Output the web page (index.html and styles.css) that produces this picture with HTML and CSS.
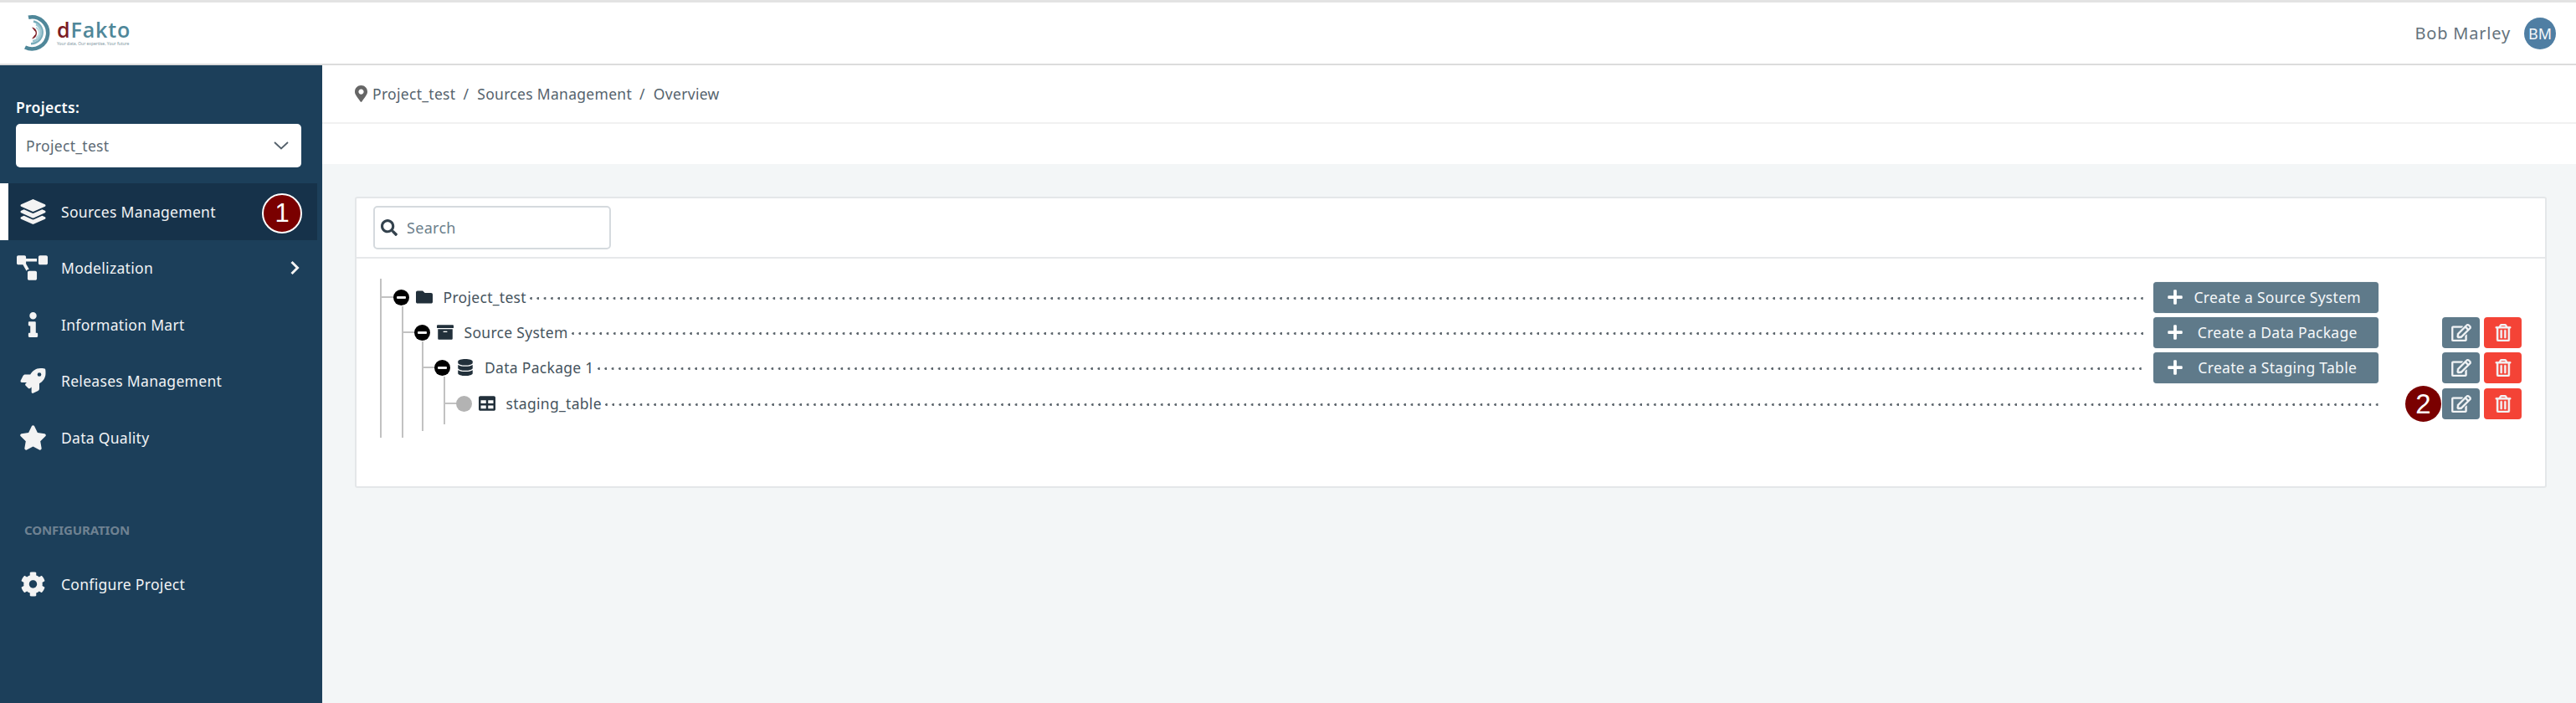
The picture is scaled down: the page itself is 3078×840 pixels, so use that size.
FILE: index.html
```html
<!DOCTYPE html>
<html lang="en">
<head>
<meta charset="utf-8">
<title>dFakto - Sources Management</title>
<link rel="stylesheet" href="styles.css">
</head>
<body>
<header class="topbar">
  <div class="logo">
    <svg class="logo-mark" viewBox="0 0 33 43" aria-hidden="true">
      <path d="M5 2.800 A19 19 0 1 1 1 38.500" fill="none" stroke="#4f8799" stroke-width="4.500"/>
      <path d="M11 7.500 A13.500 13.500 0 0 1 8 34.200" fill="none" stroke="#79adbb" stroke-width="2.500"/>
      <path d="M14 11 A10.500 10.500 0 0 1 10 31" fill="none" stroke="#9cc6d1" stroke-width="2.500"/>
      <path d="M14 15 A6.500 6.500 0 0 1 14 27" fill="none" stroke="#b6d8df" stroke-width="2"/>
      <path d="M9 14.500 A7 7 0 0 1 15 21.500 A7 7 0 0 1 9 28.500 L12 24.500 A3.500 3.500 0 0 0 12 18.500 Z" fill="#7c1d24"/>
    </svg>
    <div class="logo-words">
      <div class="logo-name"><span class="logo-d">d</span>Fakto</div>
      <div class="logo-tag">Your data, Our expertise, Your future</div>
    </div>
  </div>
  <div class="user">
    <span class="user-name">Bob Marley</span>
    <span class="avatar">BM</span>
  </div>
</header>

<div class="layout">
  <aside class="sidebar">
    <div class="projects">
      <div class="projects-label">Projects:</div>
      <div class="select">
        <span>Project_test</span>
        <svg class="select-chevron" viewBox="0 0 18 10" aria-hidden="true"><path d="M1 1l8 7.500L17 1"/></svg>
      </div>
    </div>
    <nav>
      <a class="nav-item active">
        <svg class="nav-icon" viewBox="0 0 512 512" aria-hidden="true"><path d="M12.41 148.02l232.94 105.67c6.8 3.09 14.49 3.09 21.29 0l232.94-105.67c16.55-7.51 16.55-32.52 0-40.03L266.65 2.31a25.607 25.607 0 0 0-21.29 0L12.41 107.98c-16.55 7.51-16.55 32.53 0 40.04zm487.18 88.28l-58.09-26.33-161.64 73.27c-7.56 3.43-15.59 5.17-23.86 5.17s-16.29-1.74-23.86-5.17L70.51 209.97l-58.1 26.33c-16.55 7.5-16.55 32.5 0 40l232.94 105.59c6.8 3.08 14.49 3.08 21.29 0L499.59 276.3c16.55-7.5 16.55-32.5 0-40zm0 127.8l-57.87-26.23-161.86 73.37c-7.56 3.43-15.59 5.17-23.86 5.17s-16.29-1.74-23.86-5.17L70.29 337.87 12.41 364.1c-16.55 7.5-16.55 32.5 0 40l232.94 105.59c6.8 3.08 14.49 3.08 21.29 0L499.59 404.1c16.55-7.5 16.55-32.5 0-40z"/></svg>
        <span>Sources Management</span>
        <span class="callout callout-one">1</span>
      </a>
      <a class="nav-item">
        <svg class="nav-icon nav-icon-wide" viewBox="0 0 640 512" aria-hidden="true"><path d="M384 320H256c-17.67 0-32 14.33-32 32v128c0 17.67 14.33 32 32 32h128c17.67 0 32-14.33 32-32V352c0-17.67-14.33-32-32-32zM192 32c0-17.67-14.33-32-32-32H32C14.33 0 0 14.33 0 32v128c0 17.67 14.33 32 32 32h95.72l73.16 128.04C211.98 300.98 232.4 288 256 288h.28L192 175.51V128h224V64H192V32zM608 0H480c-17.67 0-32 14.33-32 32v128c0 17.67 14.33 32 32 32h128c17.67 0 32-14.33 32-32V32c0-17.67-14.33-32-32-32z"/></svg>
        <span>Modelization</span>
        <svg class="nav-chevron" viewBox="0 0 12 18" aria-hidden="true"><path d="M2.500 2l7 7-7 7"/></svg>
      </a>
      <a class="nav-item">
        <svg class="nav-icon" viewBox="0 0 192 512" aria-hidden="true"><path d="M20 424.229h20V279.771H20c-11.046 0-20-8.954-20-20V212c0-11.046 8.954-20 20-20h112c11.046 0 20 8.954 20 20v212.229h20c11.046 0 20 8.954 20 20V492c0 11.046-8.954 20-20 20H20c-11.046 0-20-8.954-20-20v-47.771c0-11.046 8.954-20 20-20zM96 0C56.235 0 24 32.235 24 72s32.235 72 72 72 72-32.235 72-72S135.764 0 96 0z"/></svg>
        <span>Information Mart</span>
      </a>
      <a class="nav-item">
        <svg class="nav-icon" viewBox="0 0 512 512" aria-hidden="true"><path d="M505.12019,19.09375c-1.18945-5.53125-6.65819-11-12.207-12.1875C460.716,0,435.507,0,410.40747,0,307.17523,0,245.26909,55.20312,199.05238,128H94.83772c-16.34763.01562-35.55658,11.875-42.88664,26.48438L2.51562,253.29688A28.4,28.4,0,0,0,0,264a24.00867,24.00867,0,0,0,24.00582,24H127.81618l-22.47457,22.46875c-11.36521,11.36133-12.99607,32.25781,0,45.25L156.24582,406.625c11.15623,11.1875,32.15619,13.15625,45.27726,0l22.47457-22.46875V488a24.00867,24.00867,0,0,0,24.00581,24,28.55934,28.55934,0,0,0,10.707-2.51562l98.72834-49.39063c14.62888-7.29687,26.50776-26.5,26.50776-42.85937V312.79688c72.59753-46.3125,128.03493-108.40626,128.03493-211.09376C512.07526,76.5,512.07526,51.29688,505.12019,19.09375ZM384.04033,168A40,40,0,1,1,424.05,128,40.02322,40.02322,0,0,1,384.04033,168Z"/></svg>
        <span>Releases Management</span>
      </a>
      <a class="nav-item">
        <svg class="nav-icon" viewBox="0 0 576 512" aria-hidden="true"><path d="M259.3 17.8L194 150.2 47.9 171.5c-26.2 3.8-36.7 36.1-17.7 54.6l105.7 103-25 145.5c-4.5 26.3 23.2 46 46.4 33.7L288 439.6l130.7 68.7c23.2 12.2 50.9-7.4 46.4-33.7l-25-145.5 105.7-103c19-18.5 8.5-50.8-17.7-54.6L382 150.2 316.7 17.8c-11.7-23.6-45.6-23.9-57.4 0z"/></svg>
        <span>Data Quality</span>
      </a>
      <div class="nav-heading">CONFIGURATION</div>
      <a class="nav-item">
        <svg class="nav-icon" viewBox="0 0 512 512" aria-hidden="true"><path d="M487.4 315.7l-42.6-24.6c4.3-23.2 4.3-47 0-70.2l42.6-24.6c4.9-2.8 7.1-8.6 5.5-14-11.1-35.6-30-67.8-54.7-94.6-3.8-4.1-10-5.1-14.8-2.3L380.8 110c-17.9-15.4-38.5-27.3-60.8-35.1V25.8c0-5.6-3.9-10.5-9.4-11.7-36.7-8.2-74.3-7.8-109.2 0-5.5 1.2-9.4 6.1-9.4 11.700V75c-22.2 7.9-42.8 19.8-60.8 35.1L88.7 85.5c-4.9-2.8-11-1.9-14.8 2.3-24.7 26.7-43.6 58.9-54.7 94.6-1.7 5.4.6 11.2 5.5 14L67.3 221c-4.3 23.2-4.3 47 0 70.2l-42.6 24.6c-4.9 2.8-7.1 8.6-5.5 14 11.1 35.6 30 67.8 54.7 94.6 3.8 4.1 10 5.1 14.8 2.3l42.6-24.6c17.9 15.4 38.5 27.3 60.8 35.1v49.2c0 5.6 3.9 10.5 9.4 11.7 36.7 8.2 74.3 7.8 109.2 0 5.5-1.2 9.4-6.1 9.4-11.7v-49.2c22.2-7.9 42.8-19.8 60.8-35.1l42.6 24.6c4.9 2.8 11 1.9 14.8-2.3 24.7-26.7 43.6-58.9 54.7-94.6 1.5-5.5-.7-11.3-5.6-14.1zM256 336c-44.1 0-80-35.9-80-80s35.9-80 80-80 80 35.9 80 80-35.9 80-80 80z"/></svg>
        <span>Configure Project</span>
      </a>
    </nav>
  </aside>

  <main class="main">
    <div class="breadcrumb">
      <svg class="crumb-pin" viewBox="0 0 384 512" aria-hidden="true"><path d="M172.268 501.67C26.97 291.031 0 269.413 0 192 0 85.961 85.961 0 192 0s192 85.961 192 192c0 77.413-26.97 99.031-172.268 309.67-9.535 13.774-29.93 13.773-39.464 0zM192 272c44.183 0 80-35.817 80-80s-35.817-80-80-80-80 35.817-80 80 35.817 80 80 80z"/></svg>
      <span>Project_test</span><span class="crumb-sep">/</span><span>Sources Management</span><span class="crumb-sep">/</span><span>Overview</span>
    </div>
    <div class="subbar"></div>
    <div class="content">
      <section class="card">
        <div class="card-head">
          <div class="search">
            <svg class="search-icon" viewBox="0 0 512 512" aria-hidden="true"><path d="M505 442.7L405.3 343c-4.5-4.5-10.6-7-17-7H372c27.6-35.3 44-79.7 44-128C416 93.1 322.9 0 208 0S0 93.1 0 208s93.1 208 208 208c48.3 0 92.7-16.4 128-44v16.3c0 6.4 2.5 12.5 7 17l99.7 99.7c9.4 9.4 24.6 9.4 33.9 0l28.3-28.3c9.4-9.4 9.4-24.6.1-34zM208 336c-70.7 0-128-57.2-128-128 0-70.7 57.2-128 128-128 70.7 0 128 57.2 128 128 0 70.7-57.2 128-128 128z"/></svg>
            <span>Search</span>
          </div>
        </div>
        <div class="tree">
          <div class="row level-1">
            <i class="guide guide-root"></i><i class="guide guide-one"></i><i class="stub"></i>
            <span class="toggle"></span>
            <svg class="node-icon" viewBox="0 0 512 512" aria-hidden="true"><path d="M464 128H272l-64-64H48C21.49 64 0 85.49 0 112v288c0 26.51 21.49 48 48 48h416c26.51 0 48-21.49 48-48V176c0-26.51-21.49-48-48-48z"/></svg>
            <span class="label">Project_test</span><span class="dots"></span>
            <button class="create"><svg class="plus" viewBox="0 0 448 512" aria-hidden="true"><path d="M416 208H272V64c0-17.67-14.33-32-32-32h-32c-17.67 0-32 14.33-32 32v144H32c-17.67 0-32 14.33-32 32v32c0 17.67 14.33 32 32 32h144v144c0 17.67 14.33 32 32 32h32c17.67 0 32-14.33 32-32V304h144c17.67 0 32-14.33 32-32v-32c0-17.67-14.33-32-32-32z"/></svg><span class="create-text">Create a Source System</span></button>
            <div class="actions"></div>
          </div>
          <div class="row level-2">
            <i class="guide guide-two"></i><i class="stub"></i>
            <span class="toggle"></span>
            <svg class="node-icon" viewBox="0 0 512 512" aria-hidden="true"><path d="M32 448c0 17.7 14.3 32 32 32h384c17.7 0 32-14.3 32-32V160H32v288zm160-212c0-6.6 5.4-12 12-12h104c6.6 0 12 5.4 12 12v8c0 6.6-5.4 12-12 12H204c-6.6 0-12-5.4-12-12v-8zM480 32H32C14.3 32 0 46.3 0 64v48c0 8.8 7.2 16 16 16h480c8.8 0 16-7.2 16-16V64c0-17.7-14.3-32-32-32z"/></svg>
            <span class="label">Source System</span><span class="dots"></span>
            <button class="create"><svg class="plus" viewBox="0 0 448 512" aria-hidden="true"><path d="M416 208H272V64c0-17.67-14.33-32-32-32h-32c-17.67 0-32 14.33-32 32v144H32c-17.67 0-32 14.33-32 32v32c0 17.67 14.33 32 32 32h144v144c0 17.67 14.33 32 32 32h32c17.67 0 32-14.33 32-32V304h144c17.67 0 32-14.33 32-32v-32c0-17.67-14.33-32-32-32z"/></svg><span class="create-text">Create a Data Package</span></button>
            <div class="actions">
              <button class="square edit"><svg viewBox="0 0 576 512" aria-hidden="true"><path d="M402.3 344.9l32-32c5-5 13.7-1.5 13.7 5.7V464c0 26.5-21.5 48-48 48H48c-26.5 0-48-21.5-48-48V112c0-26.5 21.5-48 48-48h273.5c7.1 0 10.7 8.6 5.7 13.7l-32 32c-1.5 1.5-3.5 2.3-5.7 2.3H48v352h352V350.5c0-2.1.8-4.1 2.3-5.6zm156.6-201.8L296.3 405.7l-90.4 10c-26.2 2.9-48.5-19.2-45.6-45.6l10-90.4L432.9 17.1c22.9-22.9 59.9-22.9 82.7 0l43.2 43.2c22.9 22.9 22.9 60 .1 82.8zM460.1 174L402 115.9 216.2 301.8l-7.3 65.3 65.3-7.3L460.1 174zm64.8-79.7l-43.2-43.2c-4.1-4.1-10.8-4.1-14.8 0L436 82l58.1 58.1 30.9-30.9c4-4.2 4-10.8-.1-14.9z"/></svg></button>
              <button class="square del"><svg viewBox="0 0 448 512" aria-hidden="true"><path d="M268 416h24a12 12 0 0 0 12-12V188a12 12 0 0 0-12-12h-24a12 12 0 0 0-12 12v216a12 12 0 0 0 12 12zM432 80h-82.41l-34-56.7A48 48 0 0 0 274.41 0H173.59a48 48 0 0 0-41.16 23.3L98.41 80H16A16 16 0 0 0 0 96v16a16 16 0 0 0 16 16h16v336a48 48 0 0 0 48 48h288a48 48 0 0 0 48-48V128h16a16 16 0 0 0 16-16V96a16 16 0 0 0-16-16zM171.84 50.91A6 6 0 0 1 177 48h94a6 6 0 0 1 5.15 2.91L293.61 80H154.39zM368 464H80V128h288zm-212-48h24a12 12 0 0 0 12-12V188a12 12 0 0 0-12-12h-24a12 12 0 0 0-12 12v216a12 12 0 0 0 12 12z"/></svg></button>
            </div>
          </div>
          <div class="row level-3">
            <i class="guide guide-three"></i><i class="stub"></i>
            <span class="toggle"></span>
            <svg class="node-icon" viewBox="0 0 448 512" aria-hidden="true"><path d="M448 73.143v45.714C448 159.143 347.667 192 224 192S0 159.143 0 118.857V73.143C0 32.857 100.333 0 224 0s224 32.857 224 73.143zM448 176v102.857C448 319.143 347.667 352 224 352S0 319.143 0 278.857V176c48.125 33.143 136.208 48.572 224 48.572S399.874 209.143 448 176zm0 160v102.857C448 479.143 347.667 512 224 512S0 479.143 0 438.857V336c48.125 33.143 136.208 48.572 224 48.572S399.874 369.143 448 336z"/></svg>
            <span class="label">Data Package 1</span><span class="dots"></span>
            <button class="create"><svg class="plus" viewBox="0 0 448 512" aria-hidden="true"><path d="M416 208H272V64c0-17.67-14.33-32-32-32h-32c-17.67 0-32 14.33-32 32v144H32c-17.67 0-32 14.33-32 32v32c0 17.67 14.33 32 32 32h144v144c0 17.67 14.33 32 32 32h32c17.67 0 32-14.33 32-32V304h144c17.67 0 32-14.33 32-32v-32c0-17.67-14.33-32-32-32z"/></svg><span class="create-text">Create a Staging Table</span></button>
            <div class="actions">
              <button class="square edit"><svg viewBox="0 0 576 512" aria-hidden="true"><path d="M402.3 344.9l32-32c5-5 13.7-1.5 13.7 5.7V464c0 26.5-21.5 48-48 48H48c-26.5 0-48-21.5-48-48V112c0-26.5 21.5-48 48-48h273.5c7.1 0 10.7 8.6 5.7 13.7l-32 32c-1.5 1.5-3.5 2.3-5.7 2.3H48v352h352V350.5c0-2.1.8-4.1 2.3-5.6zm156.6-201.8L296.3 405.7l-90.4 10c-26.2 2.9-48.5-19.2-45.6-45.6l10-90.4L432.9 17.1c22.9-22.9 59.9-22.9 82.7 0l43.2 43.2c22.9 22.9 22.9 60 .1 82.8zM460.1 174L402 115.9 216.2 301.8l-7.3 65.3 65.3-7.3L460.1 174zm64.8-79.7l-43.2-43.2c-4.1-4.1-10.8-4.1-14.8 0L436 82l58.1 58.1 30.9-30.9c4-4.2 4-10.8-.1-14.9z"/></svg></button>
              <button class="square del"><svg viewBox="0 0 448 512" aria-hidden="true"><path d="M268 416h24a12 12 0 0 0 12-12V188a12 12 0 0 0-12-12h-24a12 12 0 0 0-12 12v216a12 12 0 0 0 12 12zM432 80h-82.41l-34-56.7A48 48 0 0 0 274.41 0H173.59a48 48 0 0 0-41.16 23.3L98.41 80H16A16 16 0 0 0 0 96v16a16 16 0 0 0 16 16h16v336a48 48 0 0 0 48 48h288a48 48 0 0 0 48-48V128h16a16 16 0 0 0 16-16V96a16 16 0 0 0-16-16zM171.84 50.91A6 6 0 0 1 177 48h94a6 6 0 0 1 5.15 2.91L293.61 80H154.39zM368 464H80V128h288zm-212-48h24a12 12 0 0 0 12-12V188a12 12 0 0 0-12-12h-24a12 12 0 0 0-12 12v216a12 12 0 0 0 12 12z"/></svg></button>
            </div>
          </div>
          <div class="row level-4">
            <i class="stub"></i>
            <span class="toggle leaf"></span>
            <svg class="node-icon" viewBox="0 0 512 512" aria-hidden="true"><path d="M464 32H48C21.49 32 0 53.49 0 80v352c0 26.51 21.49 48 48 48h416c26.51 0 48-21.49 48-48V80c0-26.51-21.49-48-48-48zM224 416H64v-96h160v96zm0-160H64v-96h160v96zm224 160H288v-96h160v96zm0-160H288v-96h160v96z"/></svg>
            <span class="label">staging_table</span><span class="dots dots-long"></span>
            <span class="callout callout-two">2</span>
            <div class="actions">
              <button class="square edit"><svg viewBox="0 0 576 512" aria-hidden="true"><path d="M402.3 344.9l32-32c5-5 13.7-1.5 13.7 5.7V464c0 26.5-21.5 48-48 48H48c-26.5 0-48-21.5-48-48V112c0-26.5 21.5-48 48-48h273.5c7.1 0 10.7 8.6 5.7 13.7l-32 32c-1.5 1.5-3.5 2.3-5.7 2.3H48v352h352V350.5c0-2.1.8-4.1 2.3-5.6zm156.6-201.8L296.3 405.7l-90.4 10c-26.2 2.9-48.5-19.2-45.6-45.6l10-90.4L432.9 17.1c22.9-22.9 59.9-22.9 82.7 0l43.2 43.2c22.9 22.9 22.9 60 .1 82.8zM460.1 174L402 115.9 216.2 301.8l-7.3 65.3 65.3-7.3L460.1 174zm64.8-79.7l-43.2-43.2c-4.1-4.1-10.8-4.1-14.8 0L436 82l58.1 58.1 30.9-30.9c4-4.2 4-10.8-.1-14.9z"/></svg></button>
              <button class="square del"><svg viewBox="0 0 448 512" aria-hidden="true"><path d="M268 416h24a12 12 0 0 0 12-12V188a12 12 0 0 0-12-12h-24a12 12 0 0 0-12 12v216a12 12 0 0 0 12 12zM432 80h-82.41l-34-56.7A48 48 0 0 0 274.41 0H173.59a48 48 0 0 0-41.16 23.3L98.41 80H16A16 16 0 0 0 0 96v16a16 16 0 0 0 16 16h16v336a48 48 0 0 0 48 48h288a48 48 0 0 0 48-48V128h16a16 16 0 0 0 16-16V96a16 16 0 0 0-16-16zM171.84 50.91A6 6 0 0 1 177 48h94a6 6 0 0 1 5.15 2.91L293.61 80H154.39zM368 464H80V128h288zm-212-48h24a12 12 0 0 0 12-12V188a12 12 0 0 0-12-12h-24a12 12 0 0 0-12 12v216a12 12 0 0 0 12 12z"/></svg></button>
            </div>
          </div>
        </div>
      </section>
    </div>
  </main>
</div>
</body>
</html>
```
FILE: styles.css
```css
* { box-sizing: border-box; }
html, body { margin: 0; height: 100%; }
body {
  height: 840px;
  overflow: hidden;
  display: flex;
  flex-direction: column;
  background: #fff;
  font-family: "Noto Sans", "Open Sans", sans-serif;
  font-size: 17.500px;
  letter-spacing: .3px;
  color: #46545e;
}

/* top bar */
.topbar {
  height: 78px;
  flex: none;
  display: flex;
  align-items: center;
  justify-content: space-between;
  border-top: 3px solid #e3e3e3;
  border-bottom: 2px solid #dcdcdc;
  padding: 0 24px 0 29px;
}
.logo { display: flex; align-items: center; gap: 6px; }
.logo-mark { width: 33px; height: 43px; }
.logo-words { display: flex; flex-direction: column; margin-top: -2px; }
.logo-name { font-family: "Open Sans", sans-serif; font-size: 25px; line-height: 28px; font-weight: 600; color: #4f8799; letter-spacing: .9px; }
.logo-d { color: #7c1d24; }
.logo-tag { font-size: 5px; line-height: 7px; letter-spacing: 0; color: #7f98a3; white-space: nowrap; }
.user { display: flex; align-items: center; gap: 16px; }
.user-name { font-size: 20px; color: #64727c; letter-spacing: .8px; }
.avatar {
  width: 38px; height: 38px; border-radius: 50%;
  background: #4f7ea3; color: #f5f8fa;
  display: flex; align-items: center; justify-content: center;
  font-size: 18px; letter-spacing: 0;
}

.layout { flex: 1; display: flex; min-height: 0; }

/* sidebar */
.sidebar { width: 385px; flex: none; background: #1c3f5a; color: #f1f3f5; padding-top: 38px; }
.projects { padding: 0 25px 0 19px; }
.projects-label { font-weight: 600; line-height: 24px; color: #fff; margin-bottom: 8px; }
.select {
  height: 52px; background: #fff; border-radius: 5px;
  display: flex; align-items: center; justify-content: space-between;
  padding: 0 15px 0 12px; color: #5c6a74;
}
.select-chevron { width: 18px; height: 10px; fill: none; stroke: #54616b; stroke-width: 1.800; }
nav { margin-top: 19px; }
.nav-item {
  height: 67.500px;
  display: flex; align-items: center;
  padding-left: 24px;
  position: relative;
}
.nav-item.active {
  background: #16324a;
  width: 379px;
  border-left: 10px solid #fff;
  padding-left: 14px;
}
.nav-icon { width: 33px; height: 30px; fill: #f3f3f3; margin: 0 17px 0 -1px; flex: none; }
.nav-icon-wide { width: 37px; margin: 0 16px 0 -4px; }
.nav-chevron { position: absolute; left: 346px; width: 12px; height: 18px; fill: none; stroke: #f3f3f3; stroke-width: 3; }
.nav-heading { font-size: 15px; line-height: 22px; font-weight: 700; color: #6f8292; letter-spacing: -.1px; margin: 65px 0 0 29px; height: 43px; }

.callout {
  position: absolute; border-radius: 50%;
  background: #7a0000; color: #fff;
  display: flex; align-items: center; justify-content: center;
  font-family: "Liberation Sans", Arial, sans-serif;
  letter-spacing: 0;
}
.callout-one { width: 48px; height: 48px; left: 303px; top: 12px; border: 2px solid #fff; font-size: 31px; }
.callout-two { width: 43px; height: 43px; right: 124px; top: 0; font-size: 33px; }

/* main */
.main { flex: 1; display: flex; flex-direction: column; min-width: 0; }
.breadcrumb {
  height: 70px; flex: none;
  display: flex; align-items: center;
  padding: 0 0 0 39px;
  border-bottom: 2px solid #f1f1f1;
  color: #55636d;
}
.crumb-pin { width: 15px; height: 20px; fill: #666; margin-right: 6px; }
.crumb-sep { margin: 0 10px 0 9px; }
.subbar { height: 48px; flex: none; }
.content { flex: 1; background: #f3f6f7; padding: 39px 35px 0 39px; }

.card { background: #fff; border: 2px solid #e4e7e9; border-radius: 3px; height: 348px; }
.card-head { height: 72px; border-bottom: 2px solid #e6e8ea; padding: 9px 0 0 20px; }
.search {
  width: 284px; height: 52px;
  border: 2px solid #d5dade; border-radius: 5px;
  display: flex; align-items: center;
  padding: 0 7px;
  font-size: 18px; color: #6c7f8c;
}
.search-icon { width: 20px; height: 20px; fill: #33424d; margin-right: 11px; }

/* tree */
.tree { padding-top: 25px; }
.row {
  height: 42px;
  display: flex; align-items: center;
  position: relative;
  padding-right: 28px;
  color: #46545e;
}
.level-1 { padding-left: 43.500px; }
.level-2 { padding-left: 68.500px; }
.level-3 { padding-left: 93px; }
.level-4 { padding-left: 118.500px; margin-top: 1px; }

.toggle {
  width: 19px; height: 19px; flex: none; border-radius: 50%;
  background: #000; position: relative; margin-right: 8px;
}
.toggle::after {
  content: ""; position: absolute; left: 4px; top: 8px;
  width: 11px; height: 3px; background: #f0f0f0; border-radius: 1px;
}
.toggle.leaf { background: #b3b3b3; }
.toggle.leaf::after { display: none; }
.node-icon { width: 20px; height: 20px; flex: none; fill: #22303b; margin-right: 13px; }
.label { white-space: nowrap; }
.dots {
  flex: 1; height: 3px; margin: 2px 10px 0 4px;
  background: radial-gradient(circle at 1.500px 1.500px, #5d666d 1.300px, transparent 1.500px) 0 0 / 8.300px 3px repeat-x;
}
.dots-long { margin-right: 73px; }

.guide, .stub { position: absolute; background: #c2c2c2; display: block; }
.stub { height: 2px; top: 20px; width: 18px; }
.level-1 .stub { left: 28px; }
.level-2 .stub { left: 54px; }
.level-3 .stub { left: 78px; }
.level-4 .stub { left: 104px; }
.guide { width: 2px; }
.guide-root { left: 28px; top: -1px; height: 190px; }
.guide-one { left: 54px; top: 32px; height: 157px; }
.guide-two { left: 78px; top: 32px; height: 107px; }
.guide-three { left: 104px; top: 32px; height: 57px; }

.create {
  width: 269.500px; height: 37px; flex: none;
  border: 0; border-radius: 4px; background: #5f7a8a; color: #f4f7f9;
  display: flex; align-items: center;
  padding: 0 7px 0 17px;
  font-family: inherit; font-size: 17.500px; letter-spacing: .3px;
  box-shadow: 0 0 1px #93a5b0;
}
.plus { width: 18px; height: 20px; fill: #fff; flex: none; }
.create-text { flex: 1; text-align: center; white-space: nowrap; }
.actions { width: 95px; height: 37px; margin-left: 76px; flex: none; display: flex; gap: 5px; }
.square {
  width: 45px; height: 37px; border: 0; border-radius: 4px; padding: 0;
  display: flex; align-items: center; justify-content: center;
}
.square.edit { background: #5f7a8a; }
.square.del { background: #f44336; }
.square svg { height: 21px; width: 24px; fill: #f2f4f6; stroke: #f2f4f6; stroke-width: 12; }
.callout-two + .actions { margin-left: 0; }
```
